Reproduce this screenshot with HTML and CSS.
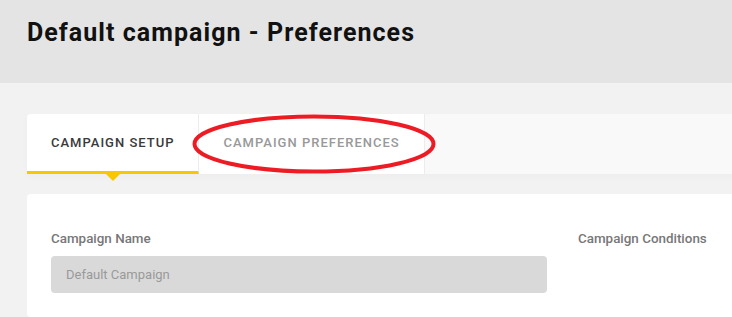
FILE: index.html
```html
<!DOCTYPE html>
<html lang="en">
<head>
<meta charset="utf-8">
<title>Default campaign - Preferences</title>
<link rel="stylesheet" href="styles.css">
</head>
<body>
<header class="page-header">
  <h1 class="page-title">Default campaign - Preferences</h1>
</header>
<main class="page-main">
  <nav class="tabs">
    <a class="tab tab-active">CAMPAIGN SETUP</a>
    <a class="tab tab-marked">CAMPAIGN PREFERENCES
      <svg class="annotation" width="250" height="66" viewBox="0 0 250 66" aria-hidden="true">
        <ellipse cx="125" cy="33" rx="119.5" ry="27.5" fill="none" stroke="#ed1c24" stroke-width="4"/>
      </svg>
    </a>
  </nav>
  <section class="card">
    <div class="field field-name">
      <label class="field-label">Campaign Name</label>
      <div class="input">Default Campaign</div>
    </div>
    <div class="field field-conditions">
      <label class="field-label">Campaign Conditions</label>
    </div>
  </section>
</main>
</body>
</html>
```

FILE: styles.css
```css
html, body {
  margin: 0;
  padding: 0;
}
body {
  background: #f2f2f2;
  font-family: Roboto, "Liberation Sans", sans-serif;
  overflow: hidden;
  width: 732px;
  height: 317px;
}
.page-header {
  background: #e4e4e4;
  height: 83px;
  box-sizing: border-box;
  padding: 18px 0 0 27px;
}
.page-title {
  margin: 0;
  font-size: 25px;
  font-weight: 700;
  line-height: 30px;
  color: #111;
  letter-spacing: 1.05px;
  white-space: nowrap;
}
.page-main {
  padding: 31px 0 0 27px;
  width: 900px;
}
.tabs {
  display: flex;
  height: 60px;
  background: #f9f9f9;
  border-radius: 4px 4px 0 0;
  box-shadow: 0 3px 8px rgba(0, 0, 0, 0.025);
}
.tab {
  position: relative;
  display: flex;
  align-items: center;
  flex-shrink: 0;
  white-space: nowrap;
  box-sizing: border-box;
  padding: 0 24px 3px 24px;
  height: 60px;
  font-size: 13px;
  font-weight: 500;
  letter-spacing: 1px;
  background: #fff;
  color: #999;
  border-right: 1px solid #ececec;
}
.tab-active {
  color: #3a3a3a;
  border-radius: 4px 0 0 0;
  border-bottom: 3px solid #f7c800;
  padding-bottom: 0;
}
.tab-active::after {
  content: "";
  position: absolute;
  left: 50%;
  bottom: -10px;
  margin-left: -7px;
  border-left: 7px solid transparent;
  border-right: 7px solid transparent;
  border-top: 7px solid #f7c800;
}
.annotation {
  position: absolute;
  left: -10px;
  top: -3px;
}
.card {
  margin-top: 20px;
  background: #fff;
  border-radius: 4px;
  display: flex;
  gap: 31px;
  padding: 37px 24px 24px;
  height: 123px;
  box-sizing: border-box;
}
.field {
  display: flex;
  flex-direction: column;
}
.field-name {
  width: 496px;
}
.field-label {
  font-size: 13.4px;
  font-weight: 500;
  color: #777;
  line-height: 16px;
  margin-bottom: 9px;
  white-space: nowrap;
}
.input {
  height: 39px;
  box-sizing: border-box;
  background: #d9d9d9;
  border-radius: 4px;
  padding: 0 15px;
  display: flex;
  align-items: center;
  font-size: 13px;
  color: #999;
}
```
